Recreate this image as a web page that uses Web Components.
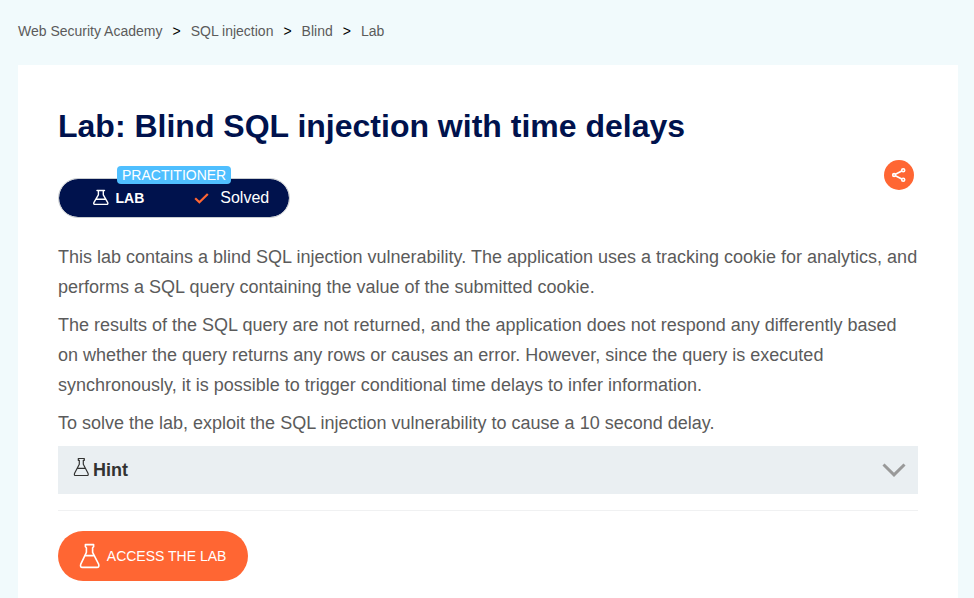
<!DOCTYPE html>
<html lang="en">
<head>
<meta charset="utf-8">
<title>Lab: Blind SQL injection with time delays</title>
<style>
html, body { height: 100%; }
body { margin: 0; overflow: hidden; background: #f1fafc; color: #5b5b5b; font-family: "Liberation Sans", Arial, sans-serif; }
</style>
</head>
<body>
<lab-page>
  <crumb-trail slot="crumbs">
    <crumb-item>Web Security Academy</crumb-item>
    <crumb-item>SQL injection</crumb-item>
    <crumb-item>Blind</crumb-item>
    <crumb-item>Lab</crumb-item>
  </crumb-trail>
  <lab-title>Lab: Blind SQL injection with time delays</lab-title>
  <status-row>
    <lab-status><span slot="level">PRACTITIONER</span><span slot="kind">LAB</span><span slot="state">Solved</span></lab-status>
    <share-button></share-button>
  </status-row>
  <text-block>This lab contains a blind SQL injection vulnerability. The application uses a tracking cookie for analytics, and performs a SQL query containing the value of the submitted cookie.</text-block>
  <text-block>The results of the SQL query are not returned, and the application does not respond any differently based on whether the query returns any rows or causes an error. However, since the query is executed synchronously, it is possible to trigger conditional time delays to infer information.</text-block>
  <text-block>To solve the lab, exploit the SQL injection vulnerability to cause a 10 second delay.</text-block>
  <hint-bar>Hint</hint-bar>
  <rule-line></rule-line>
  <access-button>ACCESS THE LAB</access-button>
</lab-page>
<script>
const define = (name, html) => customElements.define(name, class extends HTMLElement {
  constructor() {
    super();
    this.attachShadow({ mode: 'open' }).innerHTML = html;
  }
});

define('lab-page', `<style>
:host { display: block; height: 100vh; box-sizing: border-box; padding: 0 16px 0 18px; }
nav { height: 65px; }
main { box-sizing: border-box; min-height: 533px; padding: 40px 40px 17px; background: #fff; }
</style><nav><slot name="crumbs"></slot></nav><main><slot></slot></main>`);

define('crumb-trail', `<style>
:host { display: flex; gap: 10px; padding-top: 23px; font-size: 14px; line-height: 16px; }
</style><slot></slot>`);

define('crumb-item', `<style>
:host { display: flex; gap: 10px; color: #5b5b5b; white-space: nowrap; }
:host(:last-child) span { display: none; }
span { color: #000; }
</style><slot></slot><span>&gt;</span>`);

define('lab-title', `<style>
:host { display: block; }
h1 { margin: 0; font-size: 32px; line-height: 42px; color: #00124d; }
</style><h1><slot></slot></h1>`);

define('status-row', `<style>
:host { display: flex; justify-content: space-between; align-items: flex-start; box-sizing: border-box; height: 95px; padding: 13px 4px 0 0; }
</style><slot></slot>`);

define('lab-status', `<style>
:host { position: relative; display: flex; align-items: center; box-sizing: border-box; width: 232px; height: 40px; margin-top: 18px; padding-left: 34px; border: 1px solid #c9cdd0; border-radius: 20px; background: #00124d; background-clip: padding-box; color: #fff; }
.level { position: absolute; left: 58px; top: -13px; padding: 0 5px; height: 18px; border-radius: 4px; background: #4fbfff; font-size: 14px; line-height: 18px; }
.kind { margin-left: 6.500px; font-size: 14px; line-height: 18px; font-weight: bold; }
.check { margin-left: 50px; }
.state { margin-left: 11px; font-size: 16px; line-height: 18px; }
svg { flex: none; }
</style>
<svg width="16" height="18" viewBox="0 0 16 18" fill="none" stroke="#fff" stroke-width="1.400" stroke-linejoin="round" stroke-linecap="round"><path d="M4 1.500h7.500M5.400 1.500v4.300L1 13.300q-.9 2.100 1.200 2.100h11.200q2.100 0 1.200-2.100L10.300 5.800V1.500M3.400 10.200h8.800"/></svg>
<span class="kind"><slot name="kind"></slot></span>
<svg class="check" width="15" height="12" viewBox="0 0 15 12" fill="none" stroke="#ff6633" stroke-width="2.200"><path d="M1.200 6.200l4.200 4.100L13.800 2"/></svg>
<span class="state"><slot name="state"></slot></span>
<span class="level"><slot name="level"></slot></span>`);

define('share-button', `<style>
:host { display: grid; place-items: center; width: 30px; height: 30px; border-radius: 50%; background: #ff6633; }
svg { display: block; }
</style><svg width="30" height="30" viewBox="0 0 30 30" fill="none" stroke="#fff" stroke-width="1.600"><circle cx="10.100" cy="15" r="1.400"/><circle cx="19.200" cy="10.200" r="1.500"/><circle cx="19.200" cy="19.800" r="1.500"/><path d="M11.400 14.300l6.400-3.300M11.400 15.700l6.400 3.300"/></svg>`);

define('text-block', `<style>
:host { display: block; margin-bottom: 8px; font-size: 18px; line-height: 30px; }
p { margin: 0; }
</style><p><slot></slot></p>`);

define('hint-bar', `<style>
:host { display: flex; align-items: center; height: 48px; box-sizing: border-box; padding: 0 12px 0 15px; background: #eaeff2; color: #333332; font-size: 18px; font-weight: bold; }
.flask { margin: -6px 3px 0 0; }
.arrow { margin-left: auto; }
</style>
<svg class="flask" width="17" height="20" viewBox="0 0 17 20" fill="none" stroke="#333332" stroke-width="1.200" stroke-linejoin="round"><path d="M5.300 1.500h6v1.800h-1v4l4.700 9q.8 2.200-1 2.200H2.600q-1.800 0-1-2.200l4.700-9v-4h-1zM4.200 11.300h8.200"/></svg>
<slot></slot>
<svg class="arrow" width="24" height="16" viewBox="0 0 24 16" fill="none" stroke="#999" stroke-width="3"><path d="M1.500 2.500L12 12.800 22.500 2.500"/></svg>`);

define('rule-line', `<style>
:host { display: block; height: 1px; margin: 16px 0 20px; background: #f0f1f2; }
</style>`);

define('access-button', `<style>
:host { display: flex; align-items: center; box-sizing: border-box; width: 190px; height: 50px; padding-left: 21px; border-radius: 25px; background: #ff6633; color: #fff; font-size: 14px; white-space: nowrap; }
svg { margin-right: 6.800px; flex: none; }
</style>
<svg width="21" height="26" viewBox="0 0 21 26" fill="none" stroke="#fff" stroke-width="1.600" stroke-linejoin="round"><path d="M6.400 1.600h8.200v2.200l-1 1v4.600l6 11.700q1 3.300-1.600 3.300H3.400q-2.600 0-1.600-3.300l5.600-11.700V4.800l-1-1zM6 12.600h9"/></svg>
<slot></slot>`);
</script>
</body>
</html>
